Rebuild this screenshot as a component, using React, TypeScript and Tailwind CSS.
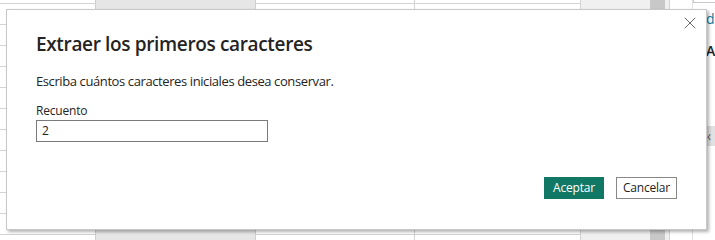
import { X } from "lucide-react";

const font = { fontFamily: '"Open Sans", "Noto Sans", sans-serif' };

function Rows({ count = 12 }: { count?: number }) {
  return (
    <div className="flex flex-col">
      <div className="h-[4px] border-b border-[#d4d4d4]" />
      {Array.from({ length: count }).map((_, i) => (
        <div key={i} className="h-[21px] border-b border-[#d4d4d4]" />
      ))}
    </div>
  );
}

export default function App() {
  return (
    <div className="relative w-[715px] h-[240px] overflow-hidden bg-white" style={font}>
      {/* spreadsheet behind the dialog */}
      <div className="flex h-full">
        <div className="w-[95px] shrink-0">
          <Rows />
        </div>
        <div className="w-[161px] shrink-0 bg-[#e6e6e6] border-x border-[#cfcfcf]" />
        <div className="w-[159px] shrink-0 border-r border-[#d4d4d4]">
          <Rows />
        </div>
        <div className="w-[165px] shrink-0">
          <Rows />
        </div>
        <div className="w-[70px] shrink-0 bg-[#f0f0f0] border-l border-[#d4d4d4]" />
        <div className="w-[15px] shrink-0 bg-[#c8c8c8]" />
        <div className="w-[5px] shrink-0 bg-[#f0f0f0] border-r border-[#d4d4d4]" />
        <div className="flex-1 flex">
          <div className="w-[23px] shrink-0 border-r border-[#e1e1e1]" />
          <div className="flex-1 flex flex-col whitespace-nowrap">
            <div className="h-[3px] border-b border-l border-[#c8c8c8]" />
            <div className="pl-[13px] pt-[7px] text-[14px] leading-[18px] text-[#0f7c9c]">d</div>
            <div className="pl-[13px] pt-[14px] text-[14px] leading-[18px] font-semibold text-[#252423]">AS</div>
            <div className="mt-[66px] ml-[13px] w-[20px] h-[20px] bg-[#e1e1e1] flex items-center text-[#605e5c] text-[14px] leading-none pl-[1px]">
              ‹
            </div>
          </div>
        </div>
      </div>

      {/* dialog */}
      <div className="absolute left-[6px] top-[9px] w-[701px] h-[221px] bg-white border border-[#c8c8c8] shadow-[2px_2px_3px_rgba(0,0,0,0.3)] flex flex-col">
        <button className="absolute right-[6px] top-[3px] w-[20px] h-[20px] flex items-center justify-center text-[#605e5c]">
          <X size={20} strokeWidth={1.1} />
        </button>
        <div className="pl-[29px] pt-[20px] pr-[40px] flex flex-col">
          <h1 className="text-[19px] leading-[28px] font-semibold text-[#252423] tracking-[-0.35px]">
            Extraer los primeros caracteres
          </h1>
          <p className="mt-[14px] text-[13px] leading-[18px] text-[#252423] tracking-[-0.4px]">
            Escriba cuántos caracteres iniciales desea conservar.
          </p>
          <label className="mt-[13px] text-[12px] leading-[16px] text-[#252423] tracking-[-0.2px]">Recuento</label>
          <div className="mt-[1px] w-[232px] h-[22px] border border-[#7a7a7a] flex items-center px-[5px] text-[12px] text-[#252423]">
            2
          </div>
        </div>
        <div className="mt-auto mb-[30px] pr-[29px] flex justify-end gap-[12px]">
          <button className="w-[60px] h-[22px] bg-[#117865] text-white text-[12px] leading-none tracking-[-0.2px]">Aceptar</button>
          <button className="w-[61px] h-[22px] border border-[#8a8886] bg-white text-[#252423] text-[12px] leading-none tracking-[-0.2px]">
            Cancelar
          </button>
        </div>
      </div>
    </div>
  );
}
